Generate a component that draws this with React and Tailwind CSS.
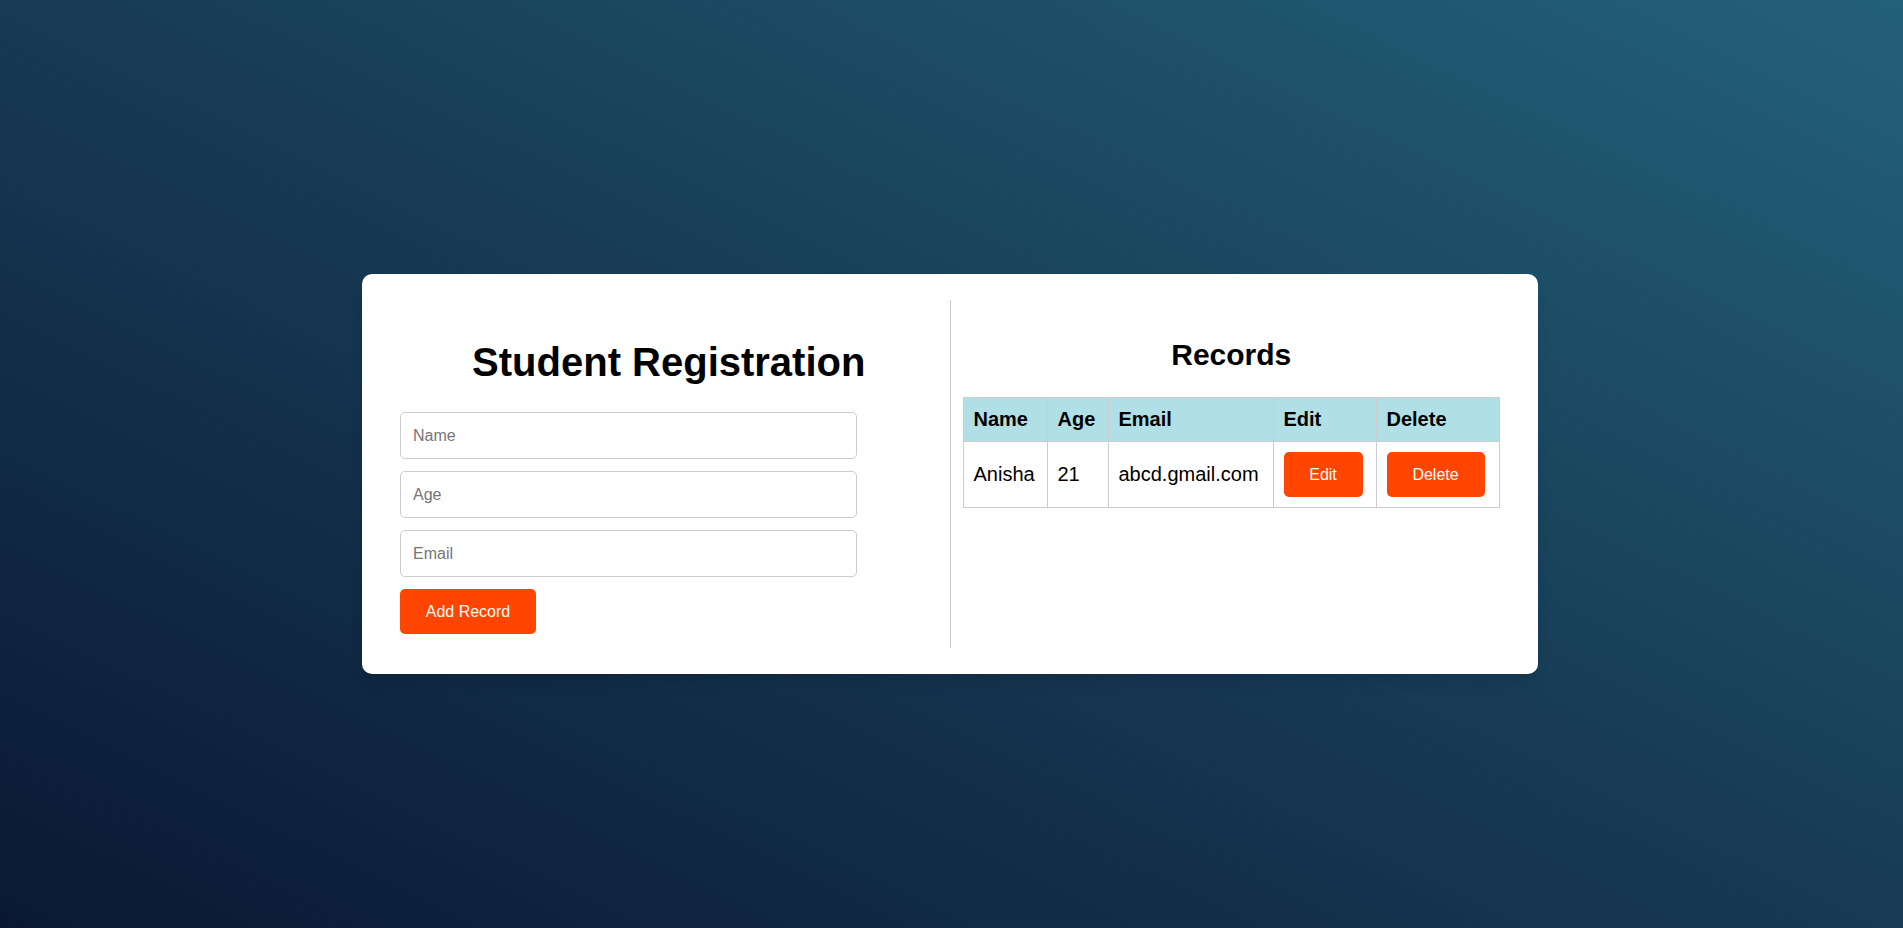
import { useState } from "react";

export default function App() {
  const [records] = useState([
    { name: "Anisha", age: "21", email: "abcd.gmail.com" },
  ]);

  return (
    <main
      className="min-h-screen w-full flex justify-center pt-[274px] pr-[3px] bg-[linear-gradient(to_top_right,#0a1833_0%,#173a55_50%,#236179_100%)]"
      style={{ fontFamily: '"Liberation Sans", Arial, sans-serif' }}
    >
      <div className="w-[1176px] h-[400px] bg-white rounded-[10px] p-[26px] flex shadow-lg">
        {/* form side */}
        <div className="flex-1 p-3">
          <h1 className="text-[40px] leading-[46px] font-bold text-black text-center my-[27px]">
            Student Registration
          </h1>
          <form className="flex flex-col">
            <input
              type="text"
              placeholder="Name"
              className="w-[85%] h-[47px] px-3 mb-3 text-base border border-[#ccc] rounded-[5px] placeholder:text-[#757575] outline-none"
            />
            <input
              type="text"
              placeholder="Age"
              className="w-[85%] h-[47px] px-3 mb-3 text-base border border-[#ccc] rounded-[5px] placeholder:text-[#757575] outline-none"
            />
            <input
              type="text"
              placeholder="Email"
              className="w-[85%] h-[47px] px-3 mb-3 text-base border border-[#ccc] rounded-[5px] placeholder:text-[#757575] outline-none"
            />
            <button
              type="button"
              className="self-start w-[136px] h-[45px] text-base text-white bg-[#ff4500] rounded-[5px]"
            >
              Add Record
            </button>
          </form>
        </div>

        {/* records side */}
        <div className="flex-1 p-3 border-l border-[#ccc]">
          <h2 className="text-[30px] leading-[35px] font-bold text-black text-center my-[25px]">
            Records
          </h2>
          <table className="w-full border-collapse text-[20px] leading-[23px] text-black">
            <thead>
              <tr className="bg-[#b0e0e6]">
                <th className="w-[84px] border border-[#ccc] p-[10px] text-left font-bold">Name</th>
                <th className="w-[61px] border border-[#ccc] p-[10px] text-left font-bold">Age</th>
                <th className="w-[165px] border border-[#ccc] p-[10px] text-left font-bold">Email</th>
                <th className="w-[103px] border border-[#ccc] p-[10px] text-left font-bold">Edit</th>
                <th className="border border-[#ccc] p-[10px] text-left font-bold">Delete</th>
              </tr>
            </thead>
            <tbody>
              {records.map((r, i) => (
                <tr key={i}>
                  <td className="border border-[#ccc] p-[10px]">{r.name}</td>
                  <td className="border border-[#ccc] p-[10px]">{r.age}</td>
                  <td className="border border-[#ccc] p-[10px]">{r.email}</td>
                  <td className="border border-[#ccc] p-[10px]">
                    <button className="w-[79px] h-[45px] text-base leading-[18px] text-white bg-[#ff4500] rounded-[5px]">
                      Edit
                    </button>
                  </td>
                  <td className="border border-[#ccc] p-[10px]">
                    <button className="w-[98px] h-[45px] text-base leading-[18px] text-white bg-[#ff4500] rounded-[5px]">
                      Delete
                    </button>
                  </td>
                </tr>
              ))}
            </tbody>
          </table>
        </div>
      </div>
    </main>
  );
}
